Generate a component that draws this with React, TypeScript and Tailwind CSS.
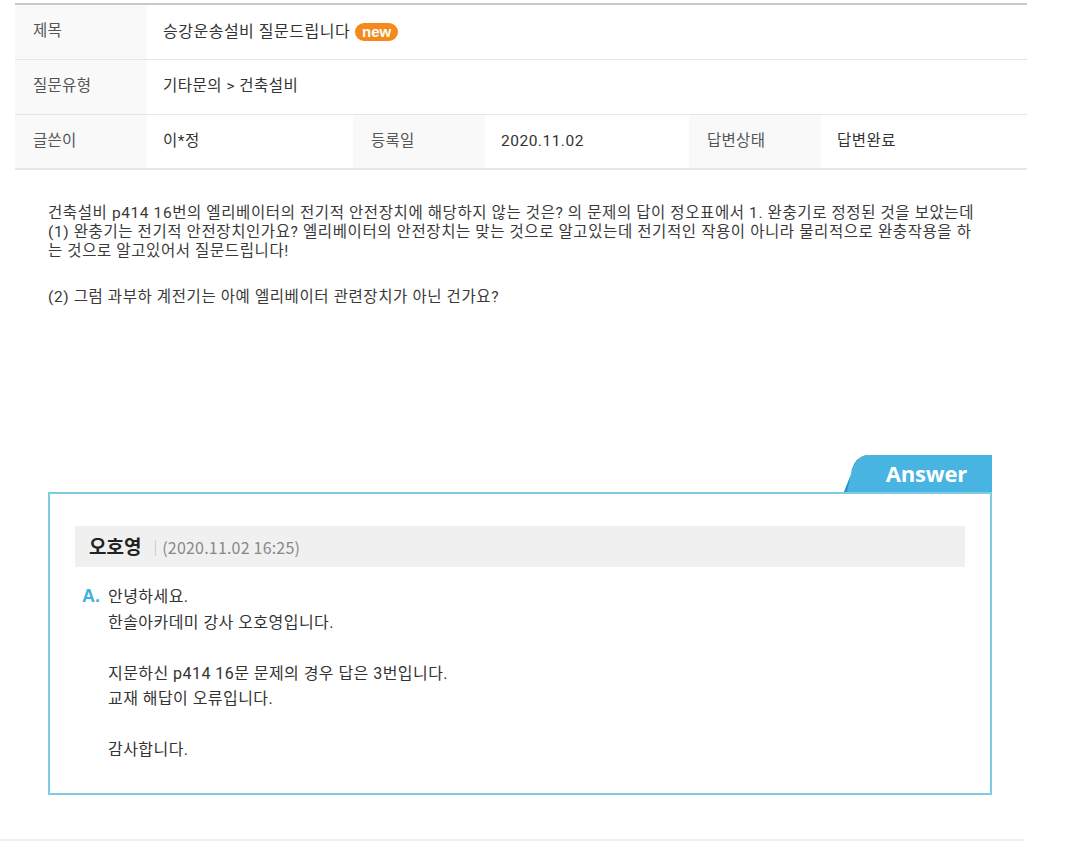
import React from 'react';

const sans = "font-['Roboto','Noto_Sans_CJK_KR',sans-serif]";
const cjk = "font-['Noto_Sans_CJK_KR','Noto_Sans',sans-serif]";

function Label({ children }: { children: React.ReactNode }) {
  return (
    <div className="w-[132px] shrink-0 bg-[#f9f9f9] pl-[18px] flex items-center text-[15.5px] tracking-[0.3px] text-[#555]">
      {children}
    </div>
  );
}

function Value({ children, className = '' }: { children: React.ReactNode; className?: string }) {
  return (
    <div className={`flex items-center pl-[16px] text-[15.5px] tracking-[0.5px] text-[#333] ${className}`}>{children}</div>
  );
}

function AnswerTab() {
  return (
    <div className="relative w-[148px] h-[37px]">
      <svg className="absolute inset-0" width="148" height="37" viewBox="0 0 148 37">
        <path d="M0 37 L10 12 Q15 0 28 0 L148 0 L148 37 Z" fill="#47b4e2" />
        <path d="M0 37 L10 12 Q15 0 28 0 L22 0 Q12 2 8 14 L3 37 Z" fill="#2a93c4" />
      </svg>
      <span className="absolute inset-0 flex items-center justify-end pr-[25px] text-[22px] font-bold text-white font-['Open_Sans','Liberation_Sans',sans-serif] tracking-[-0.2px]">
        Answer
      </span>
    </div>
  );
}

export default function App() {
  return (
    <div className={`w-[1080px] h-[850px] bg-white ${sans}`}>
      {/* info table */}
      <div className="pt-[3px] pl-[15px]">
        <div className="w-[1012px] border-t-2 border-[#c9c9c9]">
          <div className="flex h-[55px] border-b border-[#e6e6e6]">
            <Label>제목</Label>
            <Value className="gap-[5px] text-[#1a1a1a] text-[16px] tracking-[0.4px]">
              승강운송설비 질문드립니다
              <span className="inline-flex items-center justify-center h-[18px] w-[43px] rounded-full bg-[#f28a1c] text-white text-[15px] font-extrabold leading-none tracking-[0px] font-['Liberation_Sans',sans-serif] pb-[1px]">
                new
              </span>
            </Value>
          </div>
          <div className="flex h-[55px] border-b border-[#e6e6e6]">
            <Label>질문유형</Label>
            <Value>기타문의 &gt; 건축설비</Value>
          </div>
          <div className="flex h-[55px] border-b-2 border-[#e6e6e6]">
            <Label>글쓴이</Label>
            <Value className="w-[206px]">이*정</Value>
            <Label>등록일</Label>
            <Value className="w-[204px]">2020.11.02</Value>
            <Label>답변상태</Label>
            <Value>답변완료</Value>
          </div>
        </div>
      </div>

      {/* question */}
      <div className="pl-[48px] pt-[34px] text-[15.5px] leading-[19px] text-[#3a3a3a] tracking-[0.6px]">
        <p className="whitespace-nowrap">
          건축설비 p414 16번의 엘리베이터의 전기적 안전장치에 해당하지 않는 것은? 의 문제의 답이 정오표에서 1. 완충기로 정정된 것을 보았는데
        </p>
        <p className="whitespace-nowrap">
          (1) 완충기는 전기적 안전장치인가요? 엘리베이터의 안전장치는 맞는 것으로 알고있는데 전기적인 작용이 아니라 물리적으로 완충작용을 하
        </p>
        <p className="whitespace-nowrap">는 것으로 알고있어서 질문드립니다!</p>
        <p className="h-[19px]" />
        <p className="mt-[8px] whitespace-nowrap">(2) 그럼 과부하 계전기는 아예 엘리베이터 관련장치가 아닌 건가요?</p>
      </div>

      {/* answer */}
      <div className={`ml-[48px] mt-[148px] w-[944px] ${cjk}`}>
        <div className="flex justify-end">
          <AnswerTab />
        </div>
        <div className="border-2 border-[#7fcbe3] px-[25px] pt-[32px] pb-[30px]">
          <div className="h-[41px] bg-[#f0f0f0] flex items-center pl-[14px]">
            <span className="text-[19px] font-bold text-[#222]">오호영</span>
            <span className="ml-[12px] text-[14px] text-[#c8c8c8]">|</span>
            <span className="ml-[5px] text-[16px] tracking-[0.2px] text-[#888]">(2020.11.02 16:25)</span>
          </div>
          <div className={`flex mt-[17px] text-[16px] tracking-[0.45px] leading-[25.5px] text-[#333] ${sans}`}>
            <span className="w-[33px] shrink-0 pl-[7px] text-[18px] font-bold tracking-[0px] text-[#3fb0e0] font-['Liberation_Sans',sans-serif]">
              A.
            </span>
            <div>
              <p>안녕하세요.</p>
              <p>한솔아카데미 강사 오호영입니다.</p>
              <p className="h-[25.5px]" />
              <p>지문하신 p414 16문 문제의 경우 답은 3번입니다.</p>
              <p>교재 해답이 오류입니다.</p>
              <p className="h-[25.5px]" />
              <p>감사합니다.</p>
            </div>
          </div>
        </div>
      </div>

      <div className="mt-[44px] w-[1025px] h-[2px] bg-[#efefef]" />
    </div>
  );
}
